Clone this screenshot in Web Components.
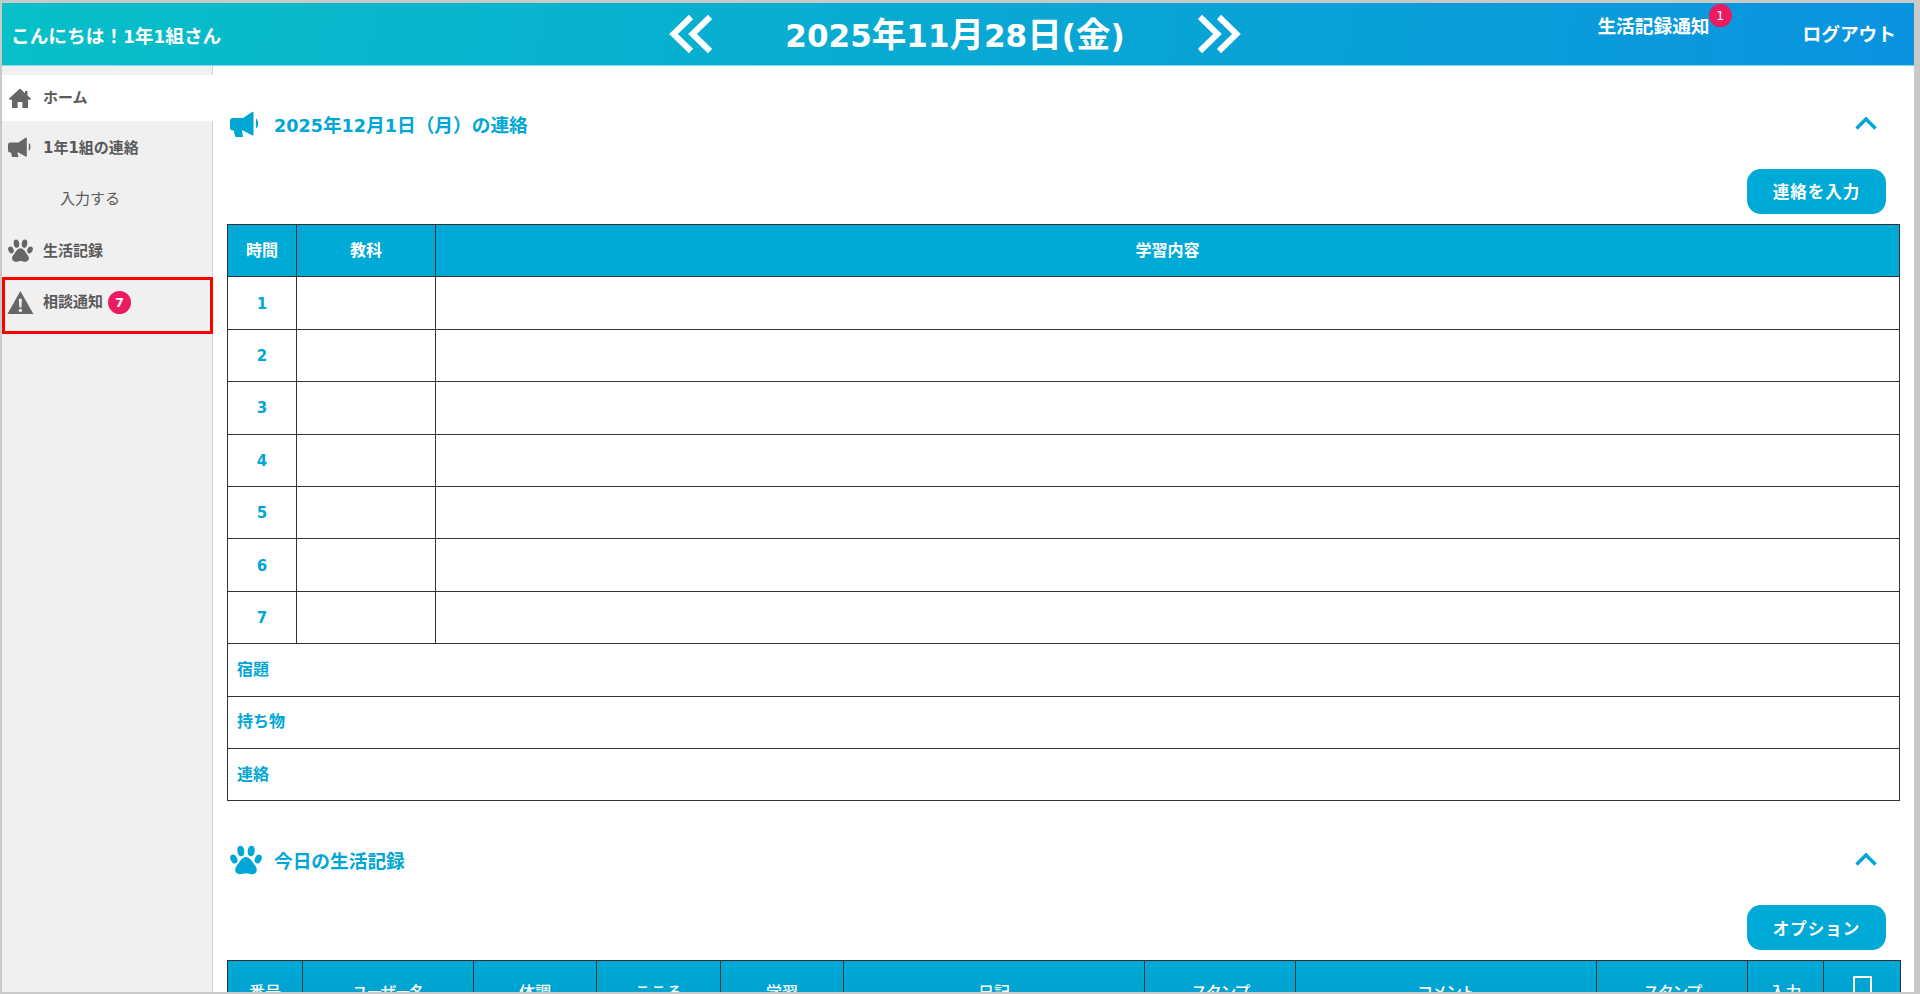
<!DOCTYPE html>
<html lang="ja">
<head>
<meta charset="utf-8">
<title>連絡帳</title>
<style>
html,body{margin:0;height:100%;overflow:hidden}
body{background:#c9c9c9;font-family:"DejaVu Sans","Noto Sans CJK JP",sans-serif;box-sizing:border-box;padding:3px 6px 2px 2px}
</style>
</head>
<body>
<app-shell>
  <app-header slot="header" greeting="こんにちは！1年1組さん" date="2025年11月28日(金)" notice="生活記録通知" count="1" logout="ログアウト"></app-header>
  <side-nav slot="nav">
    <nav-item icon="home" active>ホーム</nav-item>
    <nav-item icon="bullhorn" style="--dy:3px">1年1組の連絡</nav-item>
    <nav-item sub>入力する</nav-item>
    <nav-item icon="paw">生活記録</nav-item>
    <nav-item icon="warning" count="7" marked>相談通知</nav-item>
  </side-nav>
  <panel-section icon="bullhorn" heading="2025年12月1日（月）の連絡" action="連絡を入力" style="--gap:10px">
    <lesson-table></lesson-table>
  </panel-section>
  <panel-section icon="paw" heading="今日の生活記録" action="オプション" style="--top:33px;--gap:10px">
    <record-table></record-table>
  </panel-section>
</app-shell>
<script>
const ICONS={
 home:'<svg viewBox="0 0 24 20" width="24" height="20"><path fill="currentColor" d="M12 .5 .8 10.800l.9 1H4V20h5.600v-6h4.800v6H20v-8.200h2.300l.9-1L19.500 7.500V3h-2.500v2.200z"/></svg>',
 bullhorn:'<svg viewBox="0 0 30 26" width="30" height="26"><path fill="currentColor" d="M3 7H13L22 1a1 1 0 0 1 1.500.8V23.500a1 1 0 0 1-1.500.8L13 19.500H11.800L13 24.800a.9.9 0 0 1-.9 1.200H6a1 1 0 0 1-1-.8L3.800 19.500H3a3 3 0 0 1-3-3V10a3 3 0 0 1 3-3zM26 7.500c2.800 1.500 2.800 8.500 0 10z"/></svg>',
 paw:'<svg viewBox="0 0 32 30" width="32" height="30"><g fill="currentColor"><ellipse cx="10.800" cy="6" rx="3.500" ry="5.400" transform="rotate(-8 10.800 6)"/><ellipse cx="21.200" cy="6" rx="3.500" ry="5.400" transform="rotate(8 21.200 6)"/><ellipse cx="3.800" cy="14" rx="3.300" ry="4.600" transform="rotate(-24 3.800 14)"/><ellipse cx="28.200" cy="14" rx="3.300" ry="4.600" transform="rotate(24 28.200 14)"/><path d="M16 12c3.300 0 5.300 3.100 7.400 6.200 1.500 2.300 3.400 3.900 3.400 6.600 0 3-2.300 4.400-4.800 4.400-2.300 0-3.900-1-6-1s-3.700 1-6 1c-2.500 0-4.800-1.400-4.800-4.400 0-2.700 1.900-4.300 3.400-6.600C10.700 15.100 12.700 12 16 12z"/></g></svg>',
 warning:'<svg viewBox="0 0 26 23" width="26" height="23"><path fill="currentColor" fill-rule="evenodd" d="M13 0 26 23H0zM11.500 7.500l.5 8.500h2l.5-8.500zM13 17.200a1.700 1.700 0 1 0 0 3.400 1.700 1.700 0 0 0 0-3.400z"/></svg>',
 chevUp:'<svg viewBox="0 0 22 14" width="22" height="14"><path fill="none" stroke="currentColor" stroke-width="3.400" d="M1.500 12.500 11 3l9.500 9.500"/></svg>',
 chevL:'<svg viewBox="0 0 44 40" width="44" height="40"><path fill="none" stroke="currentColor" stroke-width="6" d="M23 3 5.500 20 23 37M42 3 24.500 20 42 37"/></svg>',
 chevR:'<svg viewBox="0 0 44 40" width="44" height="40"><path fill="none" stroke="currentColor" stroke-width="6" d="M2 3 19.500 20 2 37M21 3 38.500 20 21 37"/></svg>'
};
const digits=s=>s.replace(/[\d()]+/g,'<b>$&</b>');
class Base extends HTMLElement{
  render(html){ (this.shadowRoot||this.attachShadow({mode:'open'})).innerHTML=html; }
}
class AppIcon extends Base{
  connectedCallback(){
    this.render('<style>:host{display:inline-flex;align-items:center;justify-content:center;line-height:0}svg{display:block;width:calc(var(--s,1)*var(--w));height:auto}</style>'+ICONS[this.getAttribute('name')].replace(/width="(\d+)" height="\d+"/,(m,w)=>`style="--w:${w}px"`));
  }
}
class CountBadge extends Base{
  connectedCallback(){
    this.render(`<style>:host{display:inline-flex;align-items:center;justify-content:center;width:23px;height:23px;border-radius:50%;background:#ec1a5f;color:#fff;font:var(--badge-weight,400) 13px/1 "DejaVu Sans",sans-serif}</style><slot></slot>`);
  }
}
class AppShell extends Base{
  connectedCallback(){
    this.render(`<style>
      :host{display:flex;flex-direction:column;height:989px;background:#fff;overflow:hidden}
      .body{display:flex;flex:1;min-height:0}
      main{flex:1;min-width:0;padding:32px 13px 0 14px;overflow:hidden}
    </style>
    <slot name="header"></slot>
    <div class="body"><slot name="nav"></slot><main><slot></slot></main></div>`);
  }
}
class AppHeader extends Base{
  connectedCallback(){
    const a=k=>this.getAttribute(k);
    this.render(`<style>
      :host{display:grid;grid-template-columns:1fr auto 1fr;align-items:center;height:62px;box-sizing:content-box;border-bottom:1px solid #7fdcf0;color:#fff;background:linear-gradient(100deg,#07c0c8 0%,#08a9d2 50%,#0a93e0 100%);font-weight:700;font-family:"Noto Sans CJK JP",sans-serif}
      .hello{font-size:18.700px;padding-left:9px;white-space:nowrap}
      b{font-family:"DejaVu Sans",sans-serif;font-size:.9em;line-height:0}
      .mid{display:flex;align-items:center;gap:73px;margin-right:6px}
      .date{font-size:34.500px;line-height:1;white-space:nowrap;margin-top:-3px}
      .right{display:flex;justify-content:flex-end;align-items:center;font-size:18.700px;padding-right:18px;white-space:nowrap}
      .notice{position:relative;margin-right:93px;margin-top:-19px}
      .out{margin-top:-4px}
      count-badge{position:absolute;right:-22px;top:-7px}
    </style>
    <div class="hello">${digits(a('greeting'))}</div>
    <div class="mid"><app-icon name="chevL"></app-icon><div class="date">${digits(a('date'))}</div><app-icon name="chevR"></app-icon></div>
    <div class="right"><span class="notice">${a('notice')}<count-badge>${a('count')}</count-badge></span><span class="out">${a('logout')}</span></div>`);
  }
}
class SideNav extends Base{
  connectedCallback(){
    this.render(`<style>:host{display:block;width:210px;flex:none;background:#f0f0f0;border-right:1px solid #d4d4d4;padding-top:9px;box-sizing:content-box}</style><slot></slot>`);
  }
}
class NavItem extends Base{
  connectedCallback(){
    const icon=this.getAttribute('icon'),count=this.getAttribute('count');
    const scale={home:1,paw:.78,bullhorn:.8,warning:1.03}[icon];
    this.render(`<style>
      :host{display:flex;align-items:center;height:52px;box-sizing:border-box;color:#5a5a5a;font:700 15px/1 "DejaVu Sans","Noto Sans CJK JP",sans-serif;white-space:nowrap;margin-right:-1px}
      :host([active]){height:46px;background:#fff}
      :host([sub]){font-weight:400;padding-left:58px}
      :host([marked]){height:57px;border:3px solid #f00;}
      .ic{width:41px;padding-left:6px;box-sizing:border-box;flex:none;display:flex;color:#666}
      :host([marked]) .ic{padding-left:2px;width:38px;margin-top:-6px}
      :host([marked]) .t{margin-top:-6px}
      .t{margin-top:var(--dy,0)}
      count-badge{margin-left:5px;--badge-weight:700;margin-top:-6px}
    </style>
    ${icon?`<span class="ic"><app-icon name="${icon}" style="--s:${scale}"></app-icon></span>`:''}<span class="t"><slot></slot></span>${count?`<count-badge>${count}</count-badge>`:''}`);
  }
}
class PillButton extends Base{
  connectedCallback(){
    this.render(`<style>:host{display:inline-flex;align-items:center;justify-content:center;width:139px;height:45px;border-radius:14px;background:#00aad7;color:#fff;font:700 16.500px/1 "Noto Sans CJK JP",sans-serif;letter-spacing:1px}</style><slot></slot>`);
  }
}
class PanelSection extends Base{
  connectedCallback(){
    const a=k=>this.getAttribute(k);
    this.render(`<style>
      :host{display:block;margin-top:var(--top,0);color:#00a6d6}
      .head{display:flex;align-items:center;height:52px;padding-left:3px;gap:12px;font:700 18.700px/1 "Noto Sans CJK JP",sans-serif}
      .head h2{font:inherit;margin:0;flex:1}
      .head h2 b{font-family:"DejaVu Sans",sans-serif;font-size:.94em;line-height:0}
      .head > app-icon:first-child{width:32px;justify-content:flex-start}
      .chev{margin-right:24px;margin-top:-2px}
      .bar{display:flex;justify-content:flex-end;margin:19px 15px var(--gap,10px) 0}
    </style>
    <div class="head"><app-icon name="${a('icon')}"></app-icon><h2>${digits(a('heading'))}</h2><app-icon class="chev" name="chevUp"></app-icon></div>
    <div class="bar"><pill-button>${a('action')}</pill-button></div>
    <slot></slot>`);
  }
}
const TABLE_CSS=`
  :host{display:block;color:#00a6d6;font:700 16px/1 "Noto Sans CJK JP",sans-serif}
  table{border-collapse:collapse;width:1673px;table-layout:fixed}
  th,td{border:1px solid #333;padding:0;text-align:center}
  th{background:#00aad7;color:#fff}
  .num{font-family:"DejaVu Sans",sans-serif;font-size:15px;padding-top:2px}
  .wide{text-align:left;padding:0 0 4px 9px}
`;
class LessonTable extends Base{
  connectedCallback(){
    const rows=[1,2,3,4,5,6,7].map(n=>`<tr><td class="num">${n}</td><td></td><td></td></tr>`).join('');
    const wide=['宿題','持ち物','連絡'].map(t=>`<tr><td class="wide" colspan="3">${t}</td></tr>`).join('');
    this.render(`<style>${TABLE_CSS} tr{height:52.400px} th{padding-bottom:4px}</style>
    <table><colgroup><col style="width:69px"><col style="width:139px"><col></colgroup>
    <thead><tr><th>時間</th><th>教科</th><th>学習内容</th></tr></thead><tbody>${rows}${wide}</tbody></table>`);
  }
}
class RecordTable extends Base{
  connectedCallback(){
    const cols=[['番号',75],['ユーザー名',171],['体調',123],['こころ',124],['学習',123],['日記',301],['スタンプ',151],['コメント',301],['スタンプ',151],['入力',76],['',77]];
    const ths=cols.map(c=>`<th class="${/[ユスコ]/.test(c[0])?'kana':''}">${c[0]||'<span class="box"></span>'}</th>`).join('');
    const cg=cols.map(c=>`<col style="width:${c[1]}px">`).join('');
    this.render(`<style>${TABLE_CSS}
      th{height:60px;background:linear-gradient(#00aad7,#0099c9);font-size:16px;font-weight:500;padding-bottom:2px}
      .kana{letter-spacing:-1.500px}
      .box{display:inline-block;width:15px;height:15px;border:2px solid #fff;border-radius:1px;vertical-align:middle;margin-top:-16px}
    </style><table><colgroup>${cg}</colgroup><thead><tr>${ths}</tr></thead></table>`);
  }
}
[['app-icon',AppIcon],['count-badge',CountBadge],['app-shell',AppShell],['app-header',AppHeader],['side-nav',SideNav],['nav-item',NavItem],['pill-button',PillButton],['panel-section',PanelSection],['lesson-table',LessonTable],['record-table',RecordTable]].forEach(([n,c])=>customElements.define(n,c));
</script>
</body>
</html>
